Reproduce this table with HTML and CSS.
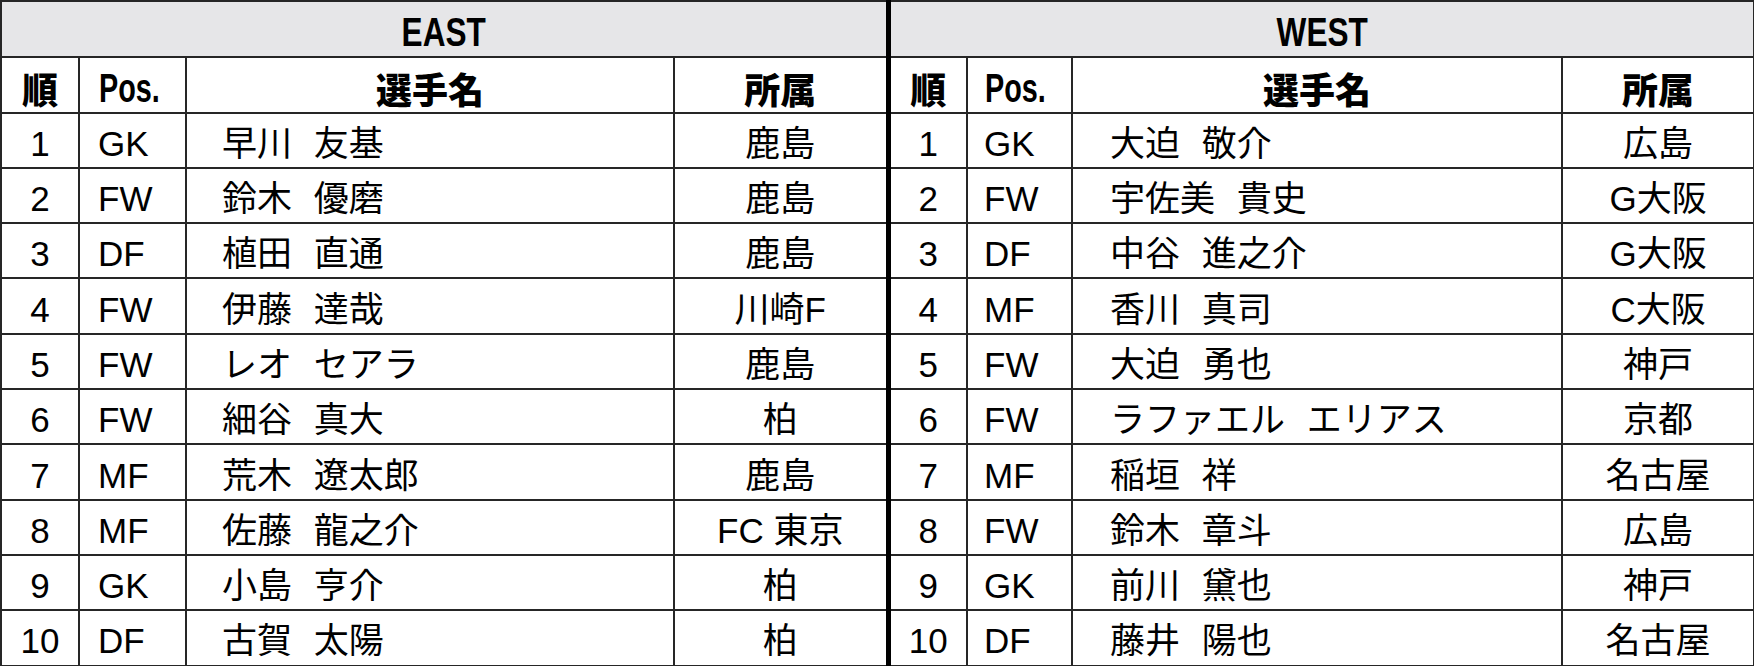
FILE: index.html
```html
<!DOCTYPE html>
<html lang="ja">
<head>
<meta charset="utf-8">
<title>EAST / WEST</title>
<link rel="stylesheet" href="styles.css">
</head>
<body>
<table class="roster">
  <colgroup>
    <col class="c-no-e"><col class="c-pos-e"><col class="c-name-e"><col class="c-club-e">
    <col class="c-no-w"><col class="c-pos-w"><col class="c-name-w"><col class="c-club-w">
  </colgroup>
  <thead>
    <tr class="title-row">
      <th colspan="4" class="title"><span class="narrow narrow-title">EAST</span></th>
      <th colspan="4" class="title split"><span class="narrow narrow-title">WEST</span></th>
    </tr>
    <tr class="head-row">
      <th class="h">順</th><th class="h h-pos"><span class="narrow narrow-pos">Pos.</span></th><th class="h">選手名</th><th class="h">所属</th>
      <th class="h split">順</th><th class="h h-pos h-pos-w"><span class="narrow narrow-pos">Pos.</span></th><th class="h">選手名</th><th class="h">所属</th>
    </tr>
  </thead>
  <tbody>
    <tr><td class="no">1</td><td class="pos">GK</td><td class="name">早川 友基</td><td class="club">鹿島</td>
        <td class="no split">1</td><td class="pos pos-w">GK</td><td class="name name-w">大迫 敬介</td><td class="club">広島</td></tr>
    <tr><td class="no">2</td><td class="pos">FW</td><td class="name">鈴木 優磨</td><td class="club">鹿島</td>
        <td class="no split">2</td><td class="pos pos-w">FW</td><td class="name name-w">宇佐美 貴史</td><td class="club">G大阪</td></tr>
    <tr><td class="no">3</td><td class="pos">DF</td><td class="name">植田 直通</td><td class="club">鹿島</td>
        <td class="no split">3</td><td class="pos pos-w">DF</td><td class="name name-w">中谷 進之介</td><td class="club">G大阪</td></tr>
    <tr><td class="no">4</td><td class="pos">FW</td><td class="name">伊藤 達哉</td><td class="club">川崎F</td>
        <td class="no split">4</td><td class="pos pos-w">MF</td><td class="name name-w">香川 真司</td><td class="club">C大阪</td></tr>
    <tr><td class="no">5</td><td class="pos">FW</td><td class="name">レオ セアラ</td><td class="club">鹿島</td>
        <td class="no split">5</td><td class="pos pos-w">FW</td><td class="name name-w">大迫 勇也</td><td class="club">神戸</td></tr>
    <tr><td class="no">6</td><td class="pos">FW</td><td class="name">細谷 真大</td><td class="club">柏</td>
        <td class="no split">6</td><td class="pos pos-w">FW</td><td class="name name-w">ラファエル エリアス</td><td class="club">京都</td></tr>
    <tr><td class="no">7</td><td class="pos">MF</td><td class="name">荒木 遼太郎</td><td class="club">鹿島</td>
        <td class="no split">7</td><td class="pos pos-w">MF</td><td class="name name-w">稲垣 祥</td><td class="club">名古屋</td></tr>
    <tr><td class="no">8</td><td class="pos">MF</td><td class="name">佐藤 龍之介</td><td class="club">FC 東京</td>
        <td class="no split">8</td><td class="pos pos-w">FW</td><td class="name name-w">鈴木 章斗</td><td class="club">広島</td></tr>
    <tr><td class="no">9</td><td class="pos">GK</td><td class="name">小島 亨介</td><td class="club">柏</td>
        <td class="no split">9</td><td class="pos pos-w">GK</td><td class="name name-w">前川 黛也</td><td class="club">神戸</td></tr>
    <tr><td class="no">10</td><td class="pos">DF</td><td class="name">古賀 太陽</td><td class="club">柏</td>
        <td class="no split">10</td><td class="pos pos-w">DF</td><td class="name name-w">藤井 陽也</td><td class="club">名古屋</td></tr>
  </tbody>
</table>
</body>
</html>
```

FILE: styles.css
```css
html, body {
  margin: 0;
  padding: 0;
  background: #ffffff;
}

.roster {
  border-collapse: collapse;
  table-layout: fixed;
  width: 1753px;
  color: #000;
  font-family: "Liberation Sans", "Noto Sans CJK JP", sans-serif;
}

.c-no-e { width: 78px; }
.c-pos-e { width: 107px; }
.c-name-e { width: 488px; }
.c-club-e { width: 214px; }
.c-no-w { width: 79px; }
.c-pos-w { width: 105px; }
.c-name-w { width: 490px; }
.c-club-w { width: 192px; }

.roster th,
.roster td {
  border: 2px solid #262626;
  padding: 6px 0 0;
  line-height: 1;
  height: 47.3px;
  vertical-align: middle;
  white-space: nowrap;
  overflow: hidden;
}

.roster .split {
  border-left: 5px solid #000;
}

.roster .title {
  background: #e6e6e8;
  text-align: center;
  padding-top: 7px;
}

.narrow {
  display: inline-block;
  font-family: "Liberation Sans", sans-serif;
  font-weight: 700;
}

.narrow-title {
  font-size: 41px;
  transform: scaleX(0.77);
}

.narrow-pos {
  font-size: 40px;
  transform: scaleX(0.72);
  transform-origin: left center;
}

.roster .h {
  font-family: "Noto Sans CJK JP", sans-serif;
  font-weight: 900;
  font-size: 36px;
  text-align: center;
}

.roster .h-pos {
  text-align: left;
  padding-left: 19px;
}

.roster .h-pos-w { padding-left: 17px; }

.roster .no,
.roster .pos,
.roster .name,
.roster .club {
  font-size: 35px;
  font-weight: 400;
}

.roster .no { text-align: center; }

.roster .pos {
  text-align: left;
  padding-left: 18px;
}

.roster .pos-w { padding-left: 16px; }

.roster .name {
  text-align: left;
  padding-left: 35px;
  word-spacing: 12px;
}

.roster .name-w { padding-left: 37px; }

.roster .club { text-align: center; }
```
